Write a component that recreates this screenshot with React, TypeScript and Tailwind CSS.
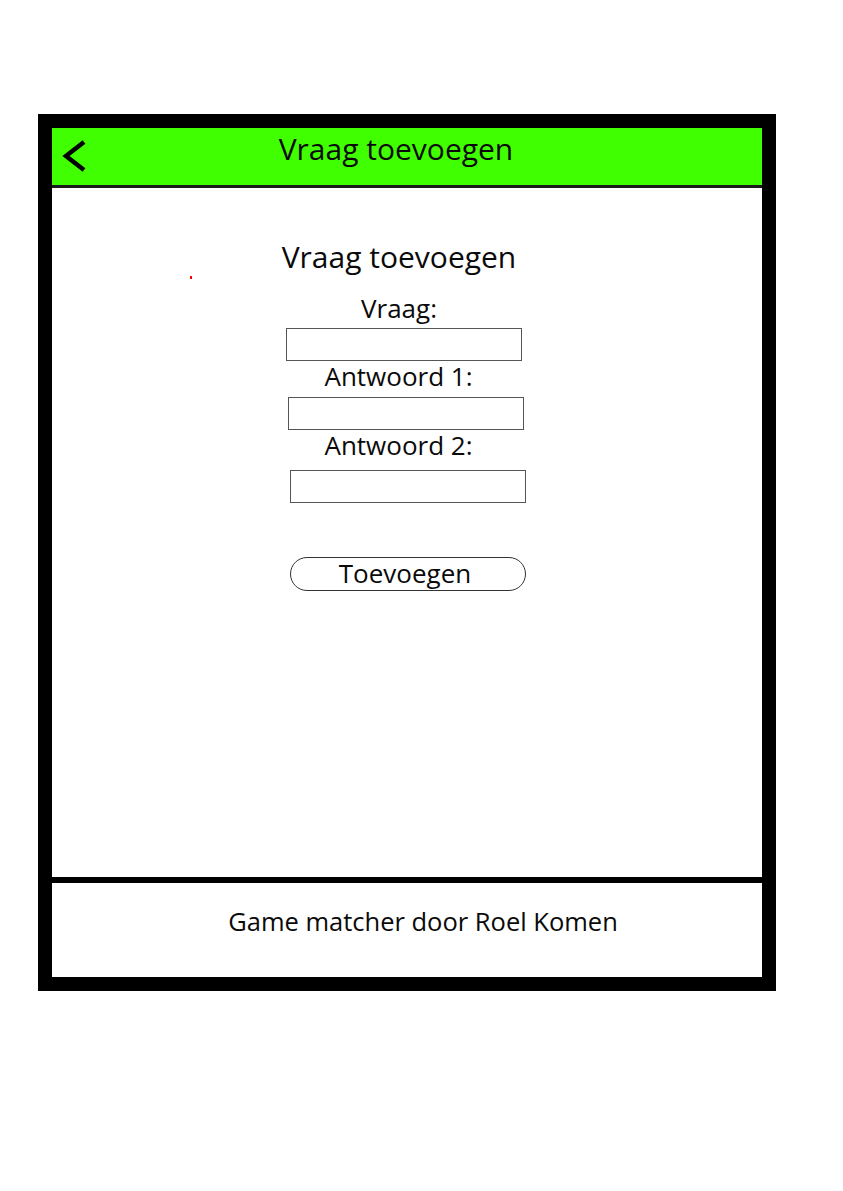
import React from "react";

const font = { fontFamily: '"Open Sans", "Noto Sans", sans-serif' };

function Field({ className }: { className: string }) {
  return <div className={`w-[236px] h-[33px] border border-[#555] bg-white ${className}`} />;
}

export default function App() {
  return (
    <div className="relative w-[843px] h-[1191px] bg-white pt-[114px] pl-[38px] text-[#0a0a0a]" style={font}>
      {/* stray red mark */}
      <span className="absolute left-[190px] top-[276px] w-[2px] h-[3px] bg-[#ff0000]" />

      <div className="w-[738px] h-[877px] border-[14px] border-black flex flex-col">
        {/* header */}
        <header className="h-[60px] shrink-0 bg-[#40ff00] border-b-[3px] border-[#1a1a1a] flex items-center">
          <svg width="28" height="34" viewBox="0 0 28 34" className="ml-[9px] shrink-0">
            <path d="M23 2 L5 16 L23 30" fill="none" stroke="#000" strokeWidth="4.5" strokeLinejoin="miter" />
          </svg>
          <h1 className="flex-1 text-center pr-[59px] text-[30px] leading-[36px] -mt-[15px]">Vraag toevoegen</h1>
        </header>

        {/* body */}
        <main className="flex-1 flex flex-col items-center">
          <h2 className="mt-[51px] mr-[16px] text-[30px] leading-[36px]">Vraag toevoegen</h2>
          <label className="mt-[18px] mr-[16px] text-[26px] leading-[30px]">Vraag:</label>
          <Field className="mt-[5px] mr-[6px]" />
          <label className="mt-0 mr-[17px] text-[26px] leading-[30px]">Antwoord 1:</label>
          <Field className="mt-[6px] mr-[2px]" />
          <label className="mt-0 mr-[17px] text-[26px] leading-[30px]">Antwoord 2:</label>
          <Field className="mt-[10px] ml-[2px]" />
          <button className="mt-[54px] ml-[2px] w-[236px] h-[34px] rounded-full border border-[#333] bg-white text-[26px] leading-[30px] text-[#0a0a0a]">
            <span className="block -mt-[2px] -ml-[6px]">Toevoegen</span>
          </button>
        </main>

        {/* footer */}
        <footer className="h-[100px] shrink-0 border-t-[6px] border-black flex justify-center">
          <p className="mt-[22px] ml-[32px] text-[25.5px] leading-[32px]">Game matcher door Roel Komen</p>
        </footer>
      </div>
    </div>
  );
}
